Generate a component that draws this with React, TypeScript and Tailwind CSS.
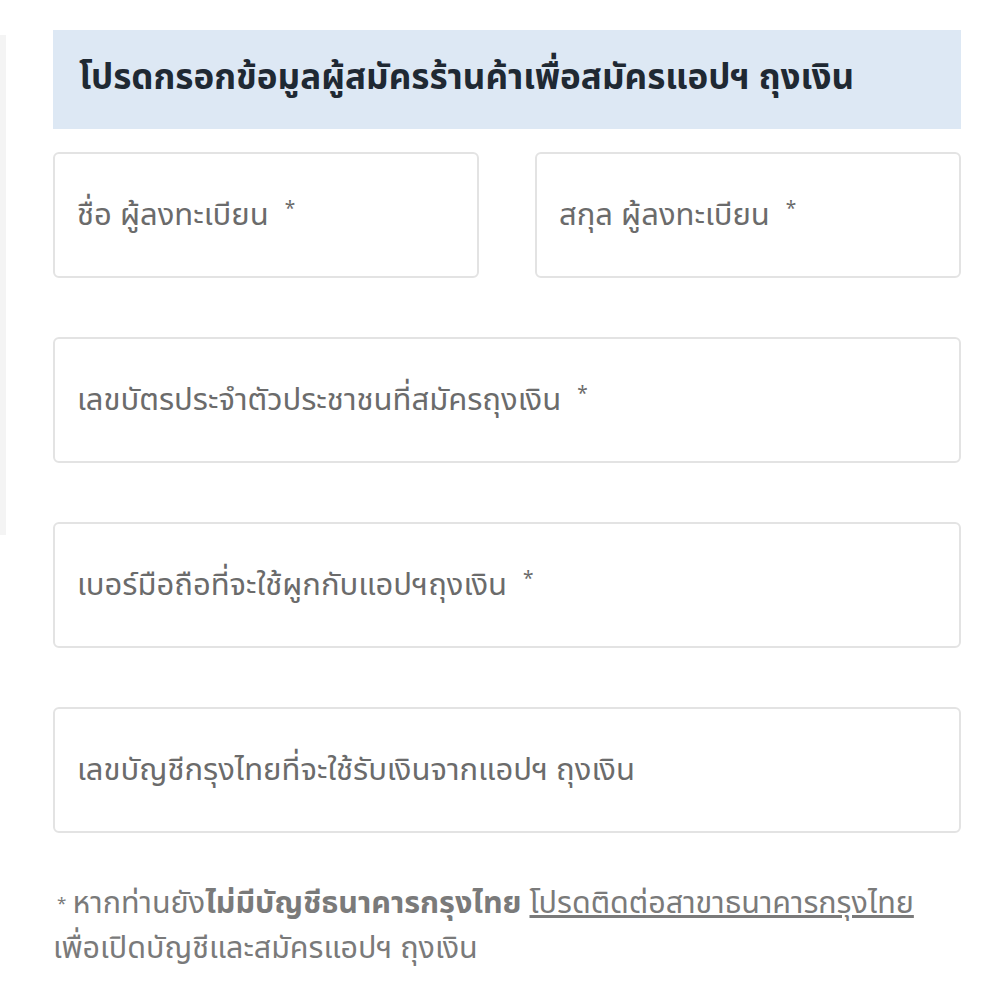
import React from "react";

const font = { fontFamily: '"Noto Sans Thai", "Noto Sans", "Open Sans", sans-serif' };

function Field({ label, required = false }: { label: string; required?: boolean }) {
  return (
    <div className="flex h-[126px] items-center rounded-md border-2 border-[#e3e3e3] bg-white px-[22px] pt-[3px]">
      <span className="text-[31px] text-[#6b6b6b]">
        {label}
        {required && <span className="relative top-[3px] ml-4 align-top text-[19px]">*</span>}
      </span>
    </div>
  );
}

export default function App() {
  return (
    <main className="relative min-h-[996px] bg-white" style={font}>
      {/* faint edge of the page behind */}
      <div className="absolute left-0 top-[35px] h-[500px] w-[6px] bg-[#f4f4f4]" />

      <div className="px-[53px] pt-[30px]" style={{ width: 1014 }}>
        <div className="flex h-[99px] items-center bg-[#dde8f4] px-[26px]">
          <h1 className="text-[35px] font-bold text-[#1f2933]">
            โปรดกรอกข้อมูลผู้สมัครร้านค้าเพื่อสมัครแอปฯ ถุงเงิน
          </h1>
        </div>

        <div className="mt-[23px] grid grid-cols-2 gap-[56px]">
          <Field label="ชื่อ ผู้ลงทะเบียน" required />
          <Field label="สกุล ผู้ลงทะเบียน" required />
        </div>

        <div className="mt-[59px] flex flex-col gap-[59px]">
          <Field label="เลขบัตรประจำตัวประชาชนที่สมัครถุงเงิน" required />
          <Field label="เบอร์มือถือที่จะใช้ผูกกับแอปฯถุงเงิน" required />
          <Field label="เลขบัญชีกรุงไทยที่จะใช้รับเงินจากแอปฯ ถุงเงิน" />
        </div>

        <p className="mt-[49px] text-[30.5px] leading-[45px] text-[#7a7a7a]">
          <span className="ml-1 mr-1.5 align-top text-[17px]">*</span>
          หากท่านยัง<span className="font-bold">ไม่มีบัญชีธนาคารกรุงไทย</span>{" "}
          <span className="underline">โปรดติดต่อสาขาธนาคารกรุงไทย</span>
          <br />
          เพื่อเปิดบัญชีและสมัครแอปฯ ถุงเงิน
        </p>
      </div>
    </main>
  );
}
